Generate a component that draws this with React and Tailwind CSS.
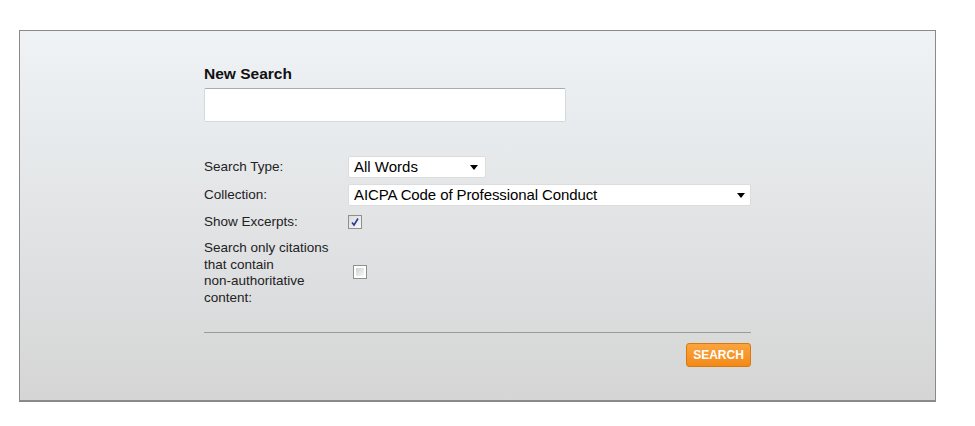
export default function App() {
  const font = { fontFamily: '"Liberation Sans", Arial, sans-serif' };
  return (
    <div className="w-[975px] h-[426px] bg-white pt-[30px] pl-[19px]" style={font}>
      <div className="w-[917px] h-[372px] border border-[#8a8a8a] border-b-2 bg-gradient-to-b from-[#eff3f6] to-[#d5d5d5] pl-[184px] pt-[35px]">
        <div className="w-[547px]">
          <div className="text-[15.5px] font-bold text-[#111] leading-[16px] h-[16px]">New Search</div>
          <div className="mt-[6px] w-[362px] h-[34px] bg-white border border-[#d4d9de] border-t-[#a9acaf] rounded-[2px]" />
          <div className="mt-[34px] flex flex-col text-[13.5px] text-[#222]">
            <div className="flex items-center h-[22px]">
              <div className="w-[144px]">Search Type:</div>
              <div className="w-[138px] h-[22px] bg-white border border-[#dcdcdc] rounded-[2px] flex items-center justify-between pl-[5px] pr-[7px] text-[15px] text-black">
                <span>All Words</span>
                <span className="w-0 h-0 border-l-[4px] border-r-[4px] border-t-[5px] border-l-transparent border-r-transparent border-t-black" />
              </div>
            </div>
            <div className="flex items-center h-[22px] mt-[6px]">
              <div className="w-[144px]">Collection:</div>
              <div className="w-[403px] h-[22px] bg-white border border-[#dcdcdc] rounded-[2px] flex items-center justify-between pl-[5px] pr-[5px] text-[15px] text-black">
                <span className="tracking-[-0.1px]">AICPA Code of Professional Conduct</span>
                <span className="w-0 h-0 border-l-[4px] border-r-[4px] border-t-[5px] border-l-transparent border-r-transparent border-t-black" />
              </div>
            </div>
            <div className="flex items-center h-[18px] mt-[7px]">
              <div className="w-[144px]">Show Excerpts:</div>
              <div className="w-[14px] h-[14px] border border-[#8e8f8f] bg-gradient-to-br from-[#dcdcdc] to-[#f8f8f8] flex items-center justify-center">
                <svg width="10" height="10" viewBox="0 0 10 10">
                  <path d="M2 5.5 L4 8 L8 1.5" fill="none" stroke="#2a3a9a" strokeWidth="1.6" />
                </svg>
              </div>
            </div>
            <div className="flex items-center mt-[9px]">
              <div className="w-[149px] leading-[16.5px]">
                Search only citations<br />that contain<br />non-authoritative<br />content:
              </div>
              <div className="w-[14px] h-[14px] border border-[#8e8f8f] bg-white p-[2px] mt-[-2px]">
                <div className="w-full h-full bg-gradient-to-br from-[#d0d0d0] to-[#f8f8f8]" />
              </div>
            </div>
          </div>
          <div className="mt-[26px] h-px bg-[#9a9a9a]" />
          <div className="flex justify-end mt-[10px]">
            <div className="w-[65px] h-[24px] rounded-[3px] border border-[#d9780f] bg-gradient-to-b from-[#fba43e] to-[#f38a15] text-white text-[12px] font-bold flex items-center justify-center">
              SEARCH
            </div>
          </div>
        </div>
      </div>
    </div>
  );
}
